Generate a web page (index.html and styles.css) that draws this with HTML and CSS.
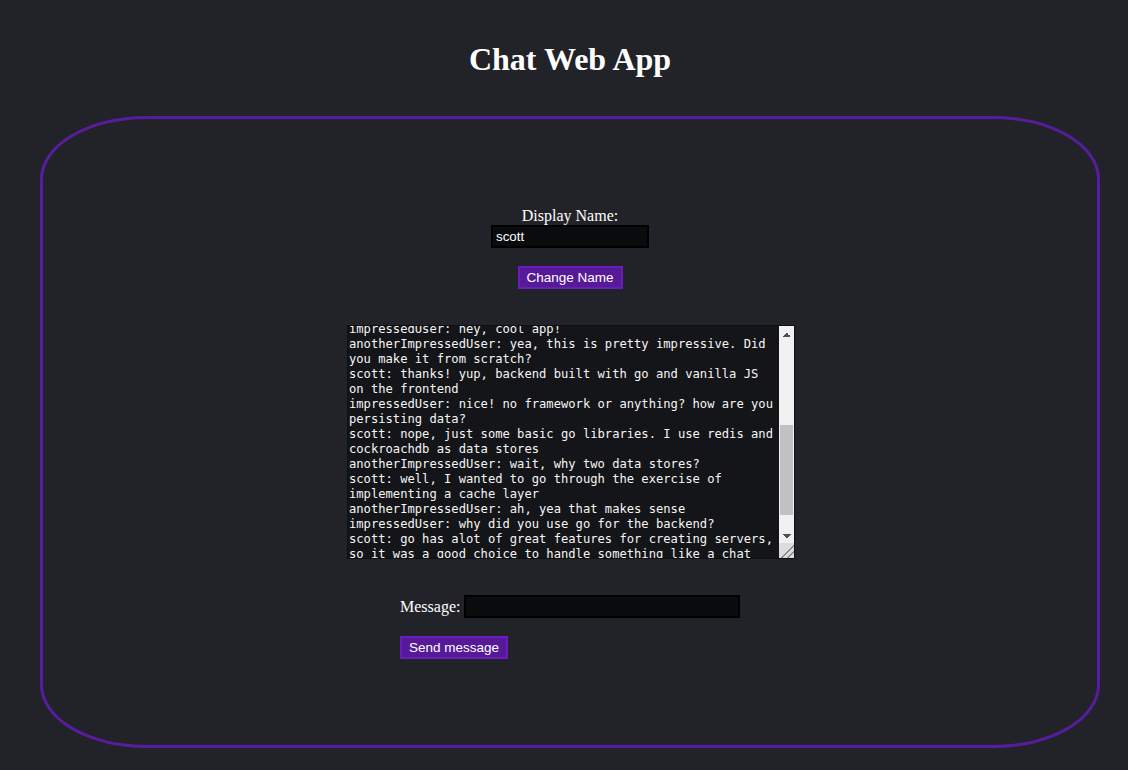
FILE: index.html
```html
<!DOCTYPE html>
<html lang="en">
<head>
<meta charset="utf-8">
<title>Chat Web App</title>
<link rel="stylesheet" href="styles.css">
</head>
<body>
<div class="page">
  <h1 class="title">Chat Web App</h1>
  <main class="panel">
    <div class="name-form">
      <label class="name-label" for="name">Display Name:</label>
      <input class="field name-field" id="name" type="text" value="scott">
    </div>
    <button class="btn change-btn" type="button">Change Name</button>
    <div class="chat-box">
      <textarea class="chat-log" id="log" readonly>scott: hello, welcome to the chat!
impressedUser: hi scott
anotherImpressedUser: hello everyone
scott: this is a demo of the chat web app
impressedUser: how does it work?
scott: messages are sent over websockets and broadcast to everyone in the room
impressedUser: neat
anotherImpressedUser: can I change my display name?
scott: yep, just type a new name and click Change Name
anotherImpressedUser: nice, thanks
scott: no problem
impressedUser: is this in real time?
scott: yes, everything updates instantly
impressedUser: hey, cool app!
anotherImpressedUser: yea, this is pretty impressive. Did you make it from scratch?
scott: thanks! yup, backend built with go and vanilla JS on the frontend
impressedUser: nice! no framework or anything? how are you persisting data?
scott: nope, just some basic go libraries. I use redis and cockroachdb as data stores
anotherImpressedUser: wait, why two data stores?
scott: well, I wanted to go through the exercise of implementing a cache layer
anotherImpressedUser: ah, yea that makes sense
impressedUser: why did you use go for the backend?
scott: go has alot of great features for creating servers, so it was a good choice to handle something like a chat server.</textarea>
      <div class="scrollbar" aria-hidden="true">
        <div class="sb-btn sb-up"></div>
        <div class="sb-track"><div class="sb-thumb"></div></div>
        <div class="sb-btn sb-down"></div>
        <div class="sb-corner"></div>
      </div>
    </div>
    <div class="message-form">
      <div class="message-row">
        <label class="message-label" for="msg">Message:</label>
        <input class="field message-field" id="msg" type="text">
      </div>
      <button class="btn send-btn" type="button">Send message</button>
    </div>
  </main>
</div>
<script src="script.js"></script>
</body>
</html>
```

FILE: styles.css
```css
html, body {
  margin: 0;
  padding: 0;
}

body {
  background: #212328;
  color: #ffffff;
  font-family: "Liberation Serif", "Times New Roman", serif;
  font-size: 16px;
}

.page {
  padding: 0 28px 0 40px;
}

.title {
  margin: 41px 0 0;
  font-size: 32px;
  font-weight: bold;
  text-align: center;
  line-height: 37px;
}

.panel {
  margin-top: 38px;
  border: 3px solid #581c9e;
  border-radius: 10%;
  padding: 88px 0 86px;
  display: flex;
  flex-direction: column;
  align-items: center;
}

.name-form {
  display: flex;
  flex-direction: column;
  align-items: center;
}

.name-label {
  display: block;
  line-height: 18px;
}

.field {
  box-sizing: border-box;
  height: 23px;
  background: #0a0b0d;
  border: 2px solid #000000;
  color: #ffffff;
  font-family: "Liberation Sans", Arial, sans-serif;
  font-size: 13.33px;
  padding: 1px 3px;
  outline: none;
}

.name-field {
  width: 158px;
}

.btn {
  box-sizing: border-box;
  height: 23px;
  background: #561a98;
  border: 2px solid #6a1dbd;
  color: #ffffff;
  font-family: "Liberation Sans", Arial, sans-serif;
  font-size: 13.5px;
  padding: 1px 6px;
  cursor: pointer;
}

.change-btn {
  margin-top: 18px;
  width: 105px;
}

.chat-box {
  box-sizing: border-box;
  margin-top: 36px;
  margin-left: 2px;
  width: 448px;
  height: 234px;
  display: flex;
  background: #141518;
  border: 1px solid #0e0f11;
}

.chat-log {
  flex: 1;
  min-width: 0;
  height: 100%;
  box-sizing: border-box;
  margin: 0;
  border: 0;
  background: transparent;
  color: #f6f6f6;
  font-family: "DejaVu Sans Mono", "Liberation Mono", monospace;
  font-size: 12.15px;
  line-height: 15px;
  padding: 2px 0 2px 1px;
  resize: none;
  overflow: hidden;
  outline: none;
}

.scrollbar {
  width: 15px;
  flex: none;
  display: flex;
  flex-direction: column;
  background: #f1f1f1;
}

.sb-btn {
  height: 15px;
  flex: none;
  background-repeat: no-repeat;
  background-size: 8px 4px;
  background-position: center;
}

.sb-up {
  margin-top: 1px;
  background-image: conic-gradient(from 135deg at 50% 0, #505050 0 90deg, transparent 90deg);
}

.sb-down {
  background-image: conic-gradient(from -45deg at 50% 100%, #505050 0 90deg, transparent 90deg);
}

.sb-track {
  flex: 1;
  padding: 83px 1px 0;
}

.sb-thumb {
  height: 90px;
  background: #c1c1c1;
}

.sb-corner {
  height: 15px;
  flex: none;
  background-color: #dcdcdc;
  background-image: linear-gradient(135deg, transparent 0 55%, #8a8a8a 55% 61%, transparent 61% 76%, #8a8a8a 76% 82%, transparent 82%);
}

.message-form {
  margin-top: 36px;
  width: 340px;
  display: flex;
  flex-direction: column;
  align-items: flex-start;
}

.message-row {
  display: flex;
  align-items: center;
  gap: 4px;
}

.message-label {
  line-height: 18px;
}

.message-field {
  width: 276px;
}

.send-btn {
  margin-top: 18px;
  width: 108px;
}
```

FILE: script.js
```js
var log = document.getElementById('log');
log.scrollTop = 216;
```
